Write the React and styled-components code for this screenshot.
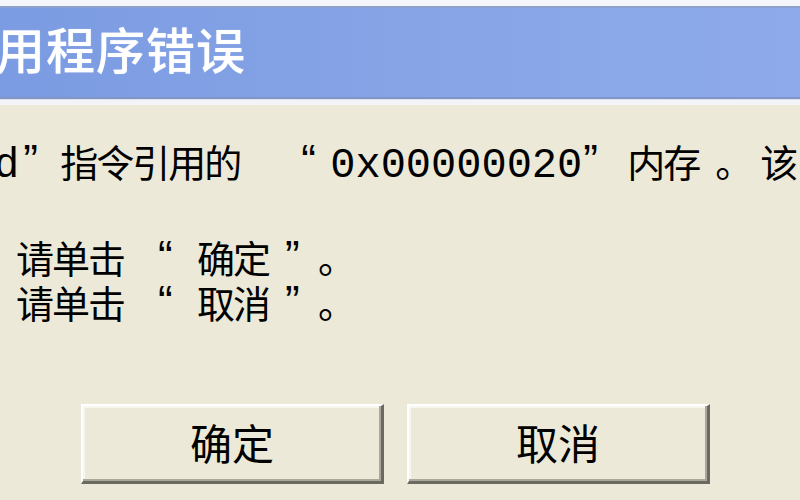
import styled, { createGlobalStyle } from "styled-components";

const GlobalStyle = createGlobalStyle`
  html, body {
    margin: 0;
    padding: 0;
    background: #f4f6fa;
    overflow: hidden;
  }
`;

const Window = styled.div`
  width: 800px;
  height: 500px;
  padding-top: 6px;
  box-sizing: border-box;
  display: flex;
  flex-direction: column;
  font-family: "Noto Sans CJK SC", "Noto Sans", sans-serif;
  overflow: hidden;
`;

const TitleBar = styled.div`
  height: 89px;
  display: flex;
  align-items: center;
  background: linear-gradient(90deg, #7b9be2 0%, #86a4e6 50%, #8eaaea 100%);
  border-top: 2px solid #8fa0cc;
  border-bottom: 2px solid #8195c8;
  color: #fff;
  font-size: 49px;
  font-weight: 500;
  letter-spacing: 1px;
  text-shadow: 0 0 1px rgba(255, 255, 255, 0.6);
`;

const TitleText = styled.span`
  margin-left: -4px;
  margin-top: -10px;
`;

const Highlight = styled.div`
  height: 5px;
  background: #f2f4f8;
  border-top: 1px solid #dfe3ec;
`;

const Body = styled.div`
  flex: 1;
  background: #ece9d8;
  display: flex;
  flex-direction: column;
  padding-top: 33px;
  color: #000;
`;

const Line = styled.div`
  font-size: 38px;
  letter-spacing: -2px;
  line-height: 45px;
  white-space: nowrap;
  margin-left: ${(p) => p.$indent}px;
  margin-bottom: ${(p) => p.$gap || 0}px;
`;

const Mono = styled.span`
  font-family: "Liberation Mono", "DejaVu Sans Mono", monospace;
  font-size: 42px;
  letter-spacing: 0;
`;

// full-width punctuation cell: glyph sits where the bitmap font puts it
const Punct = styled.span`
  display: inline-block;
  box-sizing: border-box;
  width: ${(p) => p.$w}px;
  padding-left: ${(p) => p.$pl || 0}px;
  letter-spacing: 0;
  vertical-align: top;
`;

const Quote = styled(Punct)`
  font-family: "Liberation Sans", "DejaVu Sans", sans-serif;
  font-size: 44px;
  line-height: 45px;
`;

const ButtonRow = styled.div`
  display: flex;
  gap: 23px;
  margin-top: 80px;
  padding-left: 81px;
`;

const Button = styled.button`
  width: 303px;
  height: 80px;
  box-sizing: border-box;
  background: #ece9d8;
  border-style: solid;
  border-width: 2px 3px 3px 2px;
  border-color: #ffffff #6b6a60 #6b6a60 #ffffff;
  box-shadow: inset -2px -2px 0 #aca899, inset 2px 2px 0 #f7f6ef;
  font-family: "Noto Sans CJK SC", "Noto Sans", sans-serif;
  font-size: 42px;
  color: #000;
  padding: 0 0 4px;
  cursor: pointer;
`;

export default function App() {
  return (
    <>
      <GlobalStyle />
      <Window>
        <TitleBar>
          <TitleText>用程序错误</TitleText>
        </TitleBar>
        <Highlight />
        <Body>
          <Line $indent={-6} $gap={45}>
            <Mono>d</Mono>
            <Quote $w={41} $pl={4}>”</Quote>
            指令引用的
            <Quote $w={90} $pl={61}>“</Quote>
            <Mono>0x00000020</Mono>
            <Quote $w={45} $pl={1}>”</Quote>
            内存
            <Punct $w={61} $pl={16}>。</Punct>
            该
          </Line>
          <Line $indent={16}>
            请单击
            <Quote $w={73} $pl={34}>“</Quote>
            确定
            <Quote $w={43} $pl={16}>”</Quote>
            <Punct $w={40} $pl={6}>。</Punct>
          </Line>
          <Line $indent={16}>
            请单击
            <Quote $w={73} $pl={34}>“</Quote>
            取消
            <Quote $w={43} $pl={16}>”</Quote>
            <Punct $w={40} $pl={6}>。</Punct>
          </Line>
          <ButtonRow>
            <Button>确定</Button>
            <Button>取消</Button>
          </ButtonRow>
        </Body>
      </Window>
    </>
  );
}
